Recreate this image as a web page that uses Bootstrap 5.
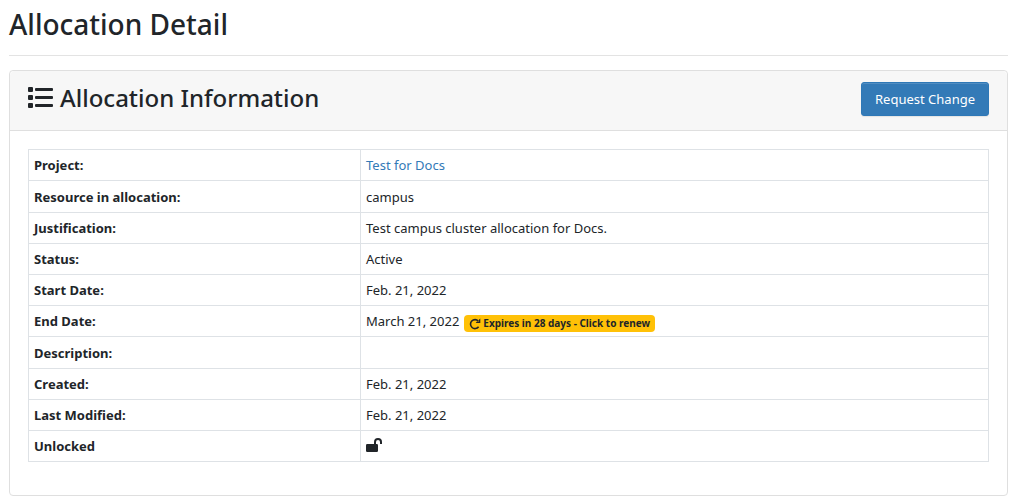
<!DOCTYPE html>
<html lang="en">
<head>
<meta charset="utf-8">
<meta name="viewport" content="width=device-width, initial-scale=1">
<title>Allocation Detail</title>
<link href="https://cdn.jsdelivr.net/npm/bootstrap@5.3.0/dist/css/bootstrap.min.css" rel="stylesheet">
<style>
body { font-family: "Segoe UI", "Noto Sans", "Open Sans", sans-serif; font-size: 13px; line-height: 22px; color: #212529; }
.page { padding: 8px 9px 7px; }
h1, h2 { font-weight: 500; }
h1 { font-size: 28px; line-height: 32px; }
h2 { font-size: 24px; line-height: 32px; }
.rule { margin: 15px 0 14px; border-top: 1px solid #e3e3e3; opacity: 1; }
.panel { border-color: #dfdfdf; border-radius: 4px; }
.panel-top { background: #f7f7f7; border-color: #dfdfdf; padding: 11px 18px 14px; }
.panel-main { padding: 18px 18px 33px; }
.list-icon { width: 26px; height: 26px; margin-right: 6px; }
.btn-change { --bs-btn-color: #fff; --bs-btn-bg: #337ab7; --bs-btn-border-color: #2e78b7; --bs-btn-hover-color: #fff; --bs-btn-hover-bg: #286090; font-size: 13px; line-height: 20px; padding: 6px 13px; border-radius: 3px; box-shadow: inset 0 1px 0 rgba(255,255,255,.15), 0 1px 1px rgba(0,0,0,.08); }
.details { border-color: #dee2e6; color: #212529; }
.details > tbody > tr > * { padding: 4px 5px; height: 31px; vertical-align: middle; }
.details > tbody > tr:nth-child(5n+2) > * { height: 32px; }
.details th { width: 332px; font-weight: 700; }
.details a { color: #337ab7; text-decoration: none; }
.details a.renew { font-size: 10px; line-height: 12px; padding: 2px 5px; margin-left: 1px; color: #212529; background: #ffc107; border-radius: 4px; vertical-align: -1px; }
.lock-icon { vertical-align: -1px; }
</style>
</head>
<body>
<main class="page">
  <h1 class="m-0">Allocation Detail</h1>
  <hr class="rule">
  <section class="card panel">
    <div class="card-header panel-top d-flex justify-content-between align-items-start">
      <h2 class="m-0 d-flex align-items-center">
        <svg class="list-icon" viewBox="0 0 26 26" fill="currentColor" aria-hidden="true"><rect y="2" width="5" height="5" rx="1"/><rect y="10" width="5" height="5" rx="1"/><rect y="18" width="5" height="5" rx="1"/><rect x="7" y="3" width="18" height="3" rx="1"/><rect x="7" y="11" width="18" height="3" rx="1"/><rect x="7" y="19" width="18" height="3" rx="1"/></svg>
        <span>Allocation Information</span>
      </h2>
      <button type="button" class="btn btn-change">Request Change</button>
    </div>
    <div class="card-body panel-main">
      <table class="table table-bordered details m-0">
        <tbody>
          <tr><th scope="row">Project:</th><td><a href="#">Test for Docs</a></td></tr>
          <tr><th scope="row">Resource in allocation:</th><td>campus</td></tr>
          <tr><th scope="row">Justification:</th><td>Test campus cluster allocation for Docs.</td></tr>
          <tr><th scope="row">Status:</th><td>Active</td></tr>
          <tr><th scope="row">Start Date:</th><td>Feb. 21, 2022</td></tr>
          <tr><th scope="row">End Date:</th><td>March 21, 2022 <a href="#" class="badge renew"><svg width="12" height="12" viewBox="0 0 12 12" fill="none" stroke="currentColor" stroke-width="1.6" aria-hidden="true"><path d="M9.6 8.8A4.5 4.5 0 1 1 9.3 3"/><path d="M11.3.5v4.6H6.7l1.2-1.5h2V1.7z" fill="currentColor" stroke="none"/></svg> Expires in 28 days - Click to renew</a></td></tr>
          <tr><th scope="row">Description:</th><td></td></tr>
          <tr><th scope="row">Created:</th><td>Feb. 21, 2022</td></tr>
          <tr><th scope="row">Last Modified:</th><td>Feb. 21, 2022</td></tr>
          <tr><th scope="row">Unlocked</th><td><svg class="lock-icon" width="16" height="14" viewBox="0 0 16 14" role="img" aria-label="Unlocked"><rect y="6" width="12" height="8" rx="1.2" fill="currentColor"/><path d="M9 7V4a3 3 0 0 1 6 0v2" fill="none" stroke="currentColor" stroke-width="2"/></svg></td></tr>
        </tbody>
      </table>
    </div>
  </section>
</main>
<script src="https://cdn.jsdelivr.net/npm/bootstrap@5.3.0/dist/js/bootstrap.bundle.min.js"></script>
</body>
</html>
